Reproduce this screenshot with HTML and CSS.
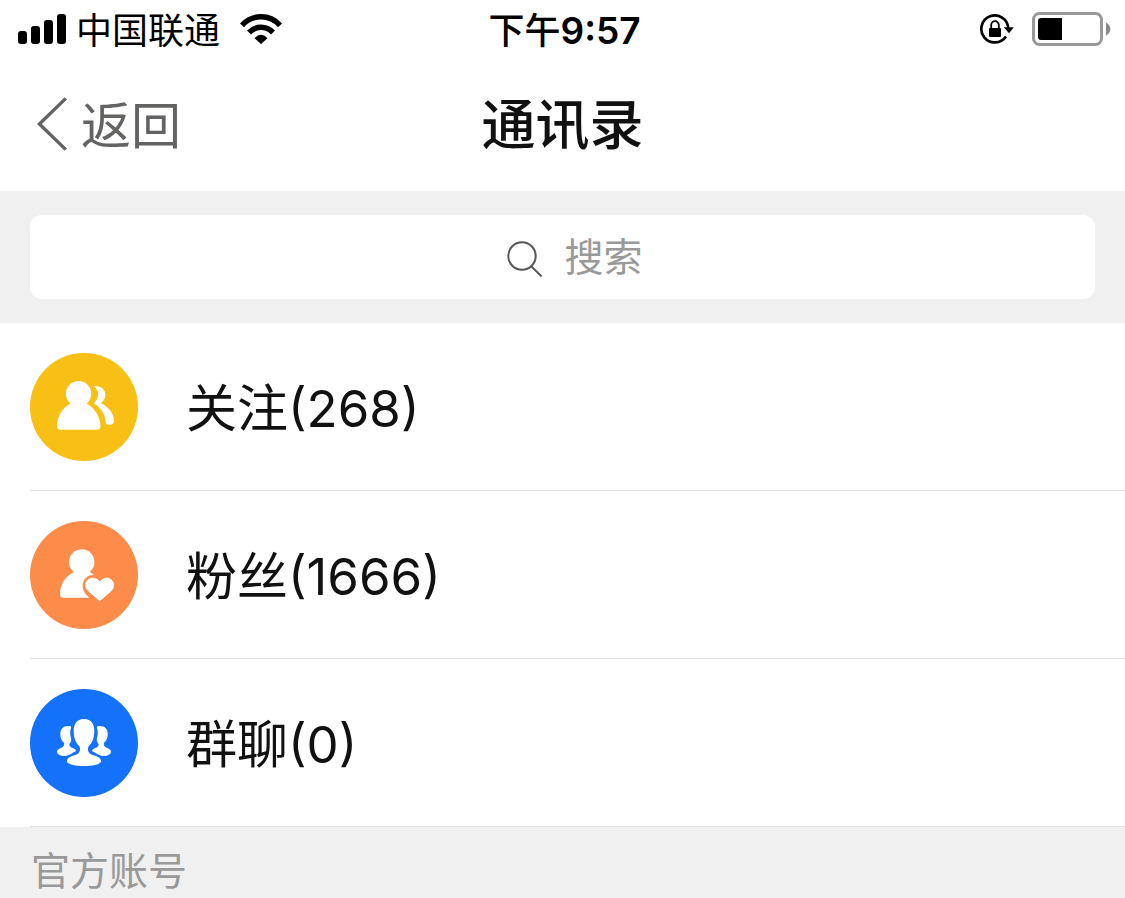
FILE: index.html
```html
<!DOCTYPE html>
<html lang="zh-CN">
<head>
<meta charset="utf-8">
<meta name="viewport" content="width=device-width, initial-scale=1">
<title>通讯录</title>
<link rel="stylesheet" href="styles.css">
</head>
<body>
<div class="status">
  <div class="status-left">
    <svg class="signal" width="48" height="30" viewBox="0 0 48 30" aria-hidden="true">
      <rect x="0" y="17" width="9" height="13" rx="3"/>
      <rect x="13" y="12" width="9" height="18" rx="3"/>
      <rect x="26" y="6" width="9" height="24" rx="3"/>
      <rect x="39" y="0" width="9" height="30" rx="3"/>
    </svg>
    <span class="carrier">中国联通</span>
    <svg class="wifi" width="42" height="30" viewBox="0 0 42 30" aria-hidden="true">
      <path d="M2 11.300A25.500 25.500 0 0 1 40 11.300" fill="none" stroke="#000" stroke-width="5.500"/>
      <path d="M9 18.500A16.500 16.500 0 0 1 33 18.500" fill="none" stroke="#000" stroke-width="5.500"/>
      <path d="M14.500 24.200Q21 17.400 27.500 24.200L21 30Z"/>
    </svg>
  </div>
  <time class="clock">下午<span class="digits">9:57</span></time>
  <div class="status-right">
    <svg width="36" height="32" viewBox="0 0 36 32" aria-hidden="true">
      <path d="M27 23.500A13.500 13.500 0 1 1 29.300 15" fill="none" stroke="#000" stroke-width="2.700"/>
      <path d="M24.800 14.300H34.800L30 20.200Z"/>
      <rect x="10" y="15" width="12" height="9" rx="1"/>
      <path d="M12.200 16V12A3.800 3.800 0 0 1 19.800 12V16" fill="none" stroke="#000" stroke-width="1.800"/>
    </svg>
    <svg width="79" height="34" viewBox="0 0 79 34" aria-hidden="true">
      <rect x="1.500" y="1.500" width="68" height="31" rx="6" fill="none" stroke="#999" stroke-width="3"/>
      <path d="M30 6V28H9Q6 28 6 25V9Q6 6 9 6Z"/>
      <path d="M74 10.500Q78.300 13 78.300 17T74 23.500Z" fill="#888"/>
    </svg>
  </div>
</div>

<header class="nav">
  <button class="back" type="button">
    <svg width="30" height="54" viewBox="0 0 30 54" aria-hidden="true">
      <path d="M28.800 1.400L2.400 27L28.800 52.600" fill="none" stroke="#636361" stroke-width="3.400"/>
    </svg>
    <span class="back-text">返回</span>
  </button>
  <h1 class="title">通讯录</h1>
</header>

<div class="search">
  <label class="search-box">
    <svg class="search-icon" width="36" height="36" viewBox="0 0 36 36" aria-hidden="true">
      <circle cx="15" cy="15" r="13.700"/>
      <path d="M24.200 25.200L34.600 35.400"/>
    </svg>
    <input class="search-input" type="text" placeholder="搜索" aria-label="搜索">
  </label>
</div>

<main>
  <nav class="list">
    <a class="row" href="#following">
      <svg class="avatar" width="108" height="108" viewBox="0 0 108 108" aria-hidden="true">
        <circle cx="54" cy="54" r="54" fill="#f8bf14"/>
        <g fill="#fff">
          <circle cx="48.600" cy="40.800" r="12.700"/>
          <path d="M41.500 50C32 54.500 27 64 27 73Q27 76.800 30.500 76.800H67Q70.500 76.800 70.500 73C70 64 65 54.500 55.700 50Z"/>
          <path d="M63.700 33.300C69 31.800 75.500 35.500 75.300 42C75.200 45.600 73.600 48.200 70.700 50C78.500 53.600 83.500 60 84 67.500Q84 71.800 80 71.800H78Q76 71.800 75.800 69.500C75 61.500 71 55 63.700 50.300C68.700 46 70.500 38.500 63.700 33.300Z"/>
        </g>
      </svg>
      <span class="label">关注(268)</span>
    </a>
    <a class="row" href="#fans">
      <svg class="avatar" width="108" height="108" viewBox="0 0 108 108" aria-hidden="true">
        <circle cx="54" cy="54" r="54" fill="#fd8b4a"/>
        <g fill="#fff">
          <circle cx="51.700" cy="41" r="12.700"/>
          <path d="M44.600 50.500C35 55 30 64 30 73Q30 76.800 33 76.800H59.500C53 72 51 65 54 59.300C56 55.500 60 53.700 64.200 53.900C62.500 52.500 60.500 51.300 58.800 50.500Z"/>
          <path d="M69.700 79.700L58 69.500C50.500 61 62.500 52 69.700 60.800C77 52 88.500 61 81.500 69.500Z" stroke="#fff" stroke-width="1" stroke-linejoin="round"/>
        </g>
      </svg>
      <span class="label">粉丝(1666)</span>
    </a>
    <a class="row" href="#groups">
      <svg class="avatar" width="108" height="108" viewBox="0 0 108 108" aria-hidden="true">
        <circle cx="54" cy="54" r="54" fill="#1472fa"/>
        <g fill="#fff">
          <path d="M54 30C61.500 30 64.300 35 64.300 42C64.300 50 61.500 54.500 58.500 57.500C57.300 60 58 63.500 60.500 65C65 67 71 68 71 72C71 75.500 63 77 54 77S37 75.500 37 72C37 68 43 67 47.500 65C50 63.500 50.700 60 49.500 57.500C46.500 54.500 43.700 50 43.700 42C43.700 35 46.500 30 54 30Z"/>
          <path id="side" d="M40.500 37.200C34 36 30.300 39.500 30.300 44.500C30.300 49.500 31.800 52 34 53.700C34.600 56 33.800 57.600 31.500 58.700C28.500 60 27 60.500 27 62.800C27 65.500 30.500 67 34 67C39 67 41 64.200 46 62.200C46 60 44 59.500 41.500 58.500C39.500 57.500 38.800 55.800 39.800 54.500C41.500 52.500 40.800 51.500 41.300 50.500C39.700 45 40 41 41.200 38.500Z"/>
          <use href="#side" transform="translate(108 0) scale(-1 1)"/>
        </g>
      </svg>
      <span class="label">群聊(0)</span>
    </a>
  </nav>
  <h2 class="section">官方账号</h2>
</main>
</body>
</html>
```
FILE: styles.css
```css
* {
  box-sizing: border-box;
}

body {
  margin: 0;
  min-height: 100vh;
  background: #f0f0f0;
  color: #111;
  font-family: Inter, "Noto Sans CJK SC", sans-serif;
  overflow-x: hidden;
}

svg {
  display: block;
  flex: none;
}

.status {
  display: grid;
  grid-template-columns: 1fr auto 1fr;
  align-items: center;
  height: 60px;
  padding: 0 14px 2px 18px;
  background: #fff;
  color: #000;
  font-size: 36px;
  line-height: 48px;
}

.status-left,
.status-right {
  display: flex;
  align-items: center;
}

.carrier {
  margin: 0 20px 0 10px;
  padding-top: 4px;
}

.clock {
  padding-top: 4px;
  font-weight: 500;
}

.digits {
  font-size: 37px;
  font-weight: 600;
}

.status-right {
  justify-content: flex-end;
  gap: 17px;
}

.nav {
  display: grid;
  grid-template-columns: 1fr auto 1fr;
  align-items: center;
  height: 131px;
  padding: 0 37px 4px;
  background: #fff;
}

.back {
  display: flex;
  align-items: center;
  justify-self: start;
  gap: 14px;
  padding: 0;
  border: 0;
  background: none;
  color: #636361;
  font: inherit;
  font-size: 50px;
  line-height: 60px;
}

.back-text {
  padding-top: 4px;
}

.title {
  margin: 0;
  padding-top: 4px;
  font-size: 54px;
  font-weight: 500;
  line-height: 64px;
}

.search {
  padding: 24px 30px;
}

.search-box {
  display: flex;
  align-items: center;
  justify-content: center;
  height: 84px;
  padding-left: 4px;
  border-radius: 12px;
  background: #fff;
}

.search-icon {
  margin: 4px 22px 0;
  fill: none;
  stroke: #555;
  stroke-width: 2;
}

.search-input {
  width: 80px;
  padding: 0;
  border: 0;
  outline: 0;
  background: none;
  color: #111;
  font: inherit;
  font-size: 39px;
  line-height: 48px;
}

.search-input::placeholder {
  color: #999;
  opacity: 1;
}

.list {
  padding-left: 30px;
  background: #fff;
}

.row {
  display: flex;
  align-items: center;
  gap: 48px;
  padding: 30px 0 29px;
  border-bottom: 1px solid #e0e0e0;
  color: #111;
  font-size: 51px;
  line-height: 60px;
  text-decoration: none;
}

.label {
  padding-top: 3px;
}

.section {
  margin: 0;
  padding: 20px 31px 0;
  color: #999;
  font-size: 39px;
  font-weight: 400;
  line-height: 48px;
}
```
